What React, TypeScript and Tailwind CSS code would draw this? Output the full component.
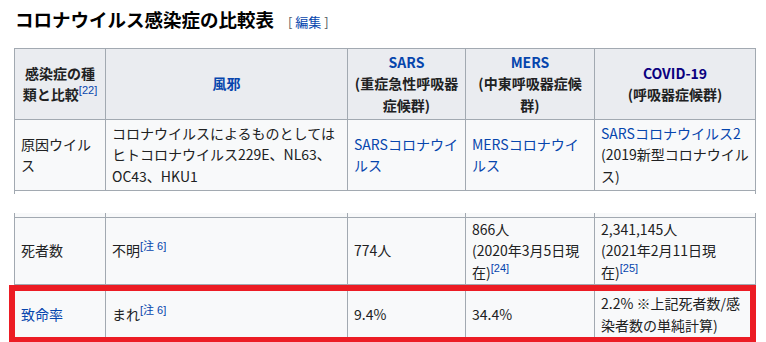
import type { ReactNode } from "react"

const font = { fontFamily: '"Noto Sans CJK JP", "Noto Sans", sans-serif' }

function Ref({ children }: { children: ReactNode }) {
  return (
    <span className="relative top-[-6px] text-[11px] leading-none text-[#0645ad] font-normal font-['Liberation_Sans','Noto_Sans_CJK_JP',sans-serif]">
      [{children}]
    </span>
  )
}

function Cell({
  children,
  head,
  center,
  className = "",
}: {
  children?: ReactNode
  head?: boolean
  center?: boolean
  className?: string
}) {
  return (
    <div
      className={
        "flex items-center border-r border-b border-[#a2a9b1] px-[6px] " +
        (head ? "bg-[#eaecf0] font-bold " : "bg-[#f8f9fa] ") +
        (center ? "justify-center text-center " : "") +
        className
      }
    >
      <div>{children}</div>
    </div>
  )
}

const cols = "grid grid-cols-[91px_242px_118px_129px_161px]"

export default function App() {
  return (
    <div className="w-[766px] h-[342px] overflow-hidden bg-white text-[#202122] text-[14px] leading-[21.5px]" style={font}>
      <div className="flex items-baseline pl-[15px] pt-[4px] h-[48px]">
        <h2 className="text-[18.5px] font-bold leading-[30px] text-black">コロナウイルス感染症の比較表</h2>
        <span className="ml-[14px] text-[13px] text-[#54595d]">
          [ <span className="text-[#0645ad]">編集</span> ]
        </span>
      </div>

      <div className="pl-[14px]">
        <div className={cols + " border-l border-t border-[#a2a9b1] w-[742px]"}>
          <Cell head center className="h-[71px]">
            感染症の種<br />類と比較<Ref>22</Ref>
          </Cell>
          <Cell head center className="text-[#0645ad]">風邪</Cell>
          <Cell head center>
            <span className="text-[#0645ad]">SARS</span><br />(重症急性呼吸器<br />症候群)
          </Cell>
          <Cell head center>
            <span className="text-[#0645ad]">MERS</span><br />(中東呼吸器症候<br />群)
          </Cell>
          <Cell head center>
            <span className="text-[#0b0080]">COVID-19</span><br />(呼吸器症候群)
          </Cell>

          <Cell className="h-[71px]">原因ウイル<br />ス</Cell>
          <Cell>
            コロナウイルスによるものとしては<br />ヒトコロナウイルス229E、NL63、<br />OC43、HKU1
          </Cell>
          <Cell className="text-[#0645ad]">SARSコロナウイ<br />ルス</Cell>
          <Cell className="text-[#0645ad]">MERSコロナウイ<br />ルス</Cell>
          <Cell>
            <span className="text-[#0645ad]">SARSコロナウイルス2</span><br />(2019新型コロナウイル<br />ス)
          </Cell>
        </div>
        <div className="h-[22px] w-[742px]">
          <div className="h-[3px] w-[742px] border-l border-r border-[#a2a9b1]" />
        </div>

        <div className="relative">
          <div className={cols + " border-l border-[#a2a9b1] w-[742px]"}>
            <Cell className="h-[5px]" />
            <Cell />
            <Cell />
            <Cell />
            <Cell />

            <Cell className="h-[67px]">死者数</Cell>
            <Cell>不明<Ref>注 6</Ref></Cell>
            <Cell>774人</Cell>
            <Cell>866人<br />(2020年3月5日現<br />在)<Ref>24</Ref></Cell>
            <Cell>2,341,145人<br />(2021年2月11日現<br />在)<Ref>25</Ref></Cell>

            <Cell className="h-[60px] text-[#0645ad]">致命率</Cell>
            <Cell>まれ<Ref>注 6</Ref></Cell>
            <Cell>9.4%</Cell>
            <Cell>34.4%</Cell>
            <Cell>2.2% ※上記死者数/感<br />染者数の単純計算)</Cell>
          </div>
          <div className="absolute left-[-5px] top-[72px] w-[747px] h-[58px] border-[6px] border-[#ec1c24]" />
        </div>
      </div>
    </div>
  )
}
